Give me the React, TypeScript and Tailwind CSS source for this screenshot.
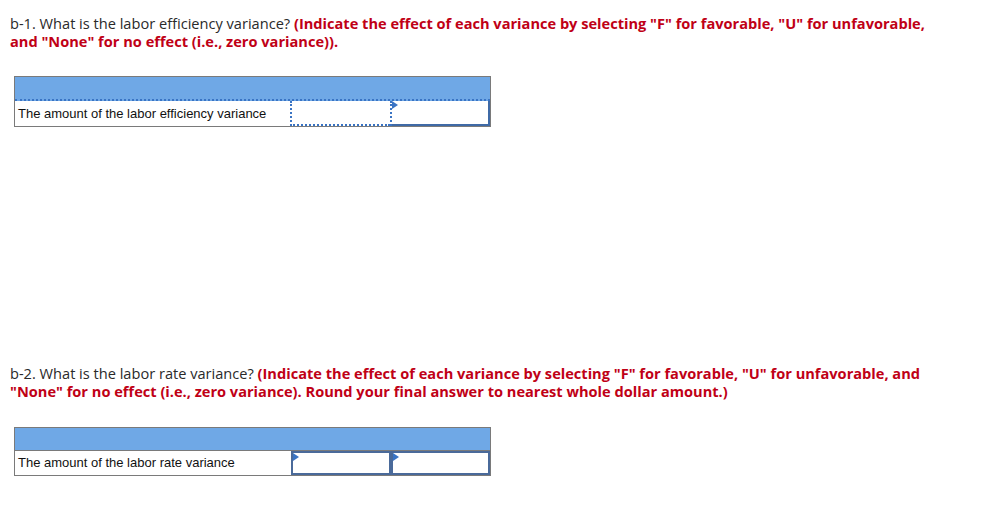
import React from "react";

function Marker() {
  return (
    <svg className="absolute left-0 top-0" width="7" height="8" viewBox="0 0 7 8">
      <path d="M0 0 L6 4 L0 8 Z" fill="#3a74c4" />
    </svg>
  );
}

export default function App() {
  return (
    <div className="w-[1005px] h-[518px] bg-white pl-[10px] pt-[14px]">
      <p className="text-[14.6px] leading-[18px] text-[#2a2a2a] whitespace-nowrap" style={{ fontFamily: '"Open Sans", sans-serif' }}>
        b-1. What is the labor efficiency variance?{" "}
        <b className="text-[#c00016] font-bold">
          (Indicate the effect of each variance by selecting "F" for favorable, "U" for unfavorable,
          <br />
          and "None" for no effect (i.e., zero variance)).
        </b>
      </p>

      <div className="mt-[26px] ml-[4px] w-[477px] border border-[#7a7a7a]" style={{ fontFamily: '"Liberation Sans", Arial, sans-serif' }}>
        <div className="h-[24px] bg-[#6fa8e6] border-b-2 border-dotted border-[#3a74c4]" />
        <div className="flex h-[25px]">
          <div className="w-[275px] pl-[3px] flex items-center text-[13px] text-[#111]">
            The amount of the labor efficiency variance
          </div>
          <div className="w-[100px] border-l-2 border-b-2 border-dotted border-[#3a74c4]" />
          <div className="relative flex-1 border-l-2 border-dotted border-[#3a74c4]">
            <div className="absolute inset-0 border-2 border-l-0 border-t-0 border-[#3f6aa6]" />
            <Marker />
          </div>
        </div>
      </div>

      <p className="mt-[237px] text-[14.6px] leading-[18px] text-[#2a2a2a] whitespace-nowrap" style={{ fontFamily: '"Open Sans", sans-serif' }}>
        b-2. What is the labor rate variance?{" "}
        <b className="text-[#c00016] font-bold">
          (Indicate the effect of each variance by selecting "F" for favorable, "U" for unfavorable, and
          <br />
          "None" for no effect (i.e., zero variance). Round your final answer to nearest whole dollar amount.)
        </b>
      </p>

      <div className="mt-[27px] ml-[4px] w-[477px] border border-[#7a7a7a]" style={{ fontFamily: '"Liberation Sans", Arial, sans-serif' }}>
        <div className="h-[23px] bg-[#6fa8e6] border-b border-[#7a7a7a]" />
        <div className="flex h-[24px]">
          <div className="w-[276px] pl-[3px] flex items-center text-[13px] text-[#111]">
            The amount of the labor rate variance
          </div>
          <div className="relative w-[100px] border-2 border-[#4a6a9a]">
            <Marker />
          </div>
          <div className="relative flex-1 border-2 border-[#4a6a9a]">
            <Marker />
          </div>
        </div>
      </div>
    </div>
  );
}
